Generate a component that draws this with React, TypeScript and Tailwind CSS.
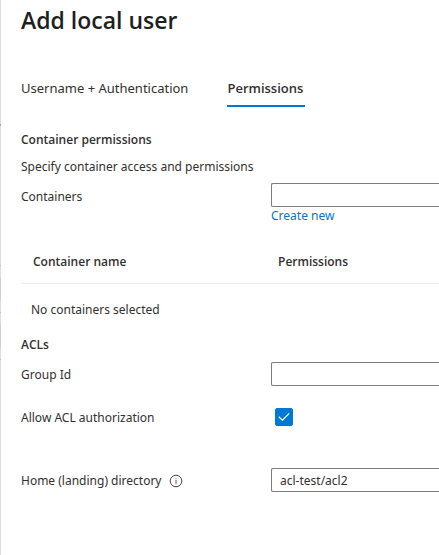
import { useState } from 'react';

const fieldClass =
  'h-6 min-w-0 flex-1 rounded-l-xs border border-r-0 border-[#7f7d7b] bg-white px-2 text-[#323130] outline-none focus:border-[#0078d4]';

function InfoIcon() {
  return (
    <svg width="14" height="14" viewBox="0 0 14 14" fill="none" role="img" aria-label="More information">
      <circle cx="7" cy="7" r="5.8" stroke="#484644" strokeWidth="1" />
      <path d="M7 6v4" stroke="#605e5c" strokeWidth="1" />
      <path d="M7 4v1" stroke="#605e5c" strokeWidth="1" />
    </svg>
  );
}

function PageEdge() {
  return (
    <div aria-hidden="true" className="flex w-px shrink-0 flex-col bg-[#dcdcdc]">
      <div className="mt-[124px] h-[2px] bg-[#a8a8a8]" />
      <div className="mt-[139px] h-px bg-[#c0c0c0]" />
      <div className="mt-[11px] h-6 bg-[#cfcfcf]" />
      <div className="mt-[11px] h-px bg-[#c0c0c0]" />
      <div className="mt-[11px] h-6 bg-[#cfcfcf]" />
      <div className="mt-[11px] h-px bg-[#c0c0c0]" />
    </div>
  );
}

export default function App() {
  const [container, setContainer] = useState('');
  const [groupId, setGroupId] = useState('');
  const [allowAcl, setAllowAcl] = useState(true);
  const [home, setHome] = useState('acl-test/acl2');

  return (
    <div className="flex min-h-screen bg-white font-['Noto_Sans','Open_Sans',sans-serif] text-[12px] leading-5 text-[#323130]">
      <PageEdge />
      <main className="min-w-0 flex-1 pt-1 pb-10 pl-5">
        <h1 className="font-['Open_Sans','Noto_Sans',sans-serif] text-[23px] leading-8 font-semibold text-[#201f1e]">
          Add local user
        </h1>

        <div role="tablist" className="mt-[42px] flex gap-[39px] text-[13px]">
          <button type="button" role="tab" aria-selected="false" className="border-b-2 border-transparent pb-[7px]">
            Username + Authentication
          </button>
          <button
            type="button"
            role="tab"
            aria-selected="true"
            className="border-b-2 border-[#0078d4] pr-[2px] pb-[7px] font-['Open_Sans','Noto_Sans',sans-serif] font-semibold"
          >
            Permissions
          </button>
        </div>

        <section className="mt-[23px]">
          <h2 className="font-['Open_Sans','Noto_Sans',sans-serif] font-semibold">Container permissions</h2>
          <p className="mt-[7px]">Specify container access and permissions</p>
          <div className="mt-[5px] flex items-center">
            <label htmlFor="containers" className="w-[250px] shrink-0 pt-[5px]">
              Containers
            </label>
            <input
              id="containers"
              className={fieldClass}
              value={container}
              onChange={(e) => setContainer(e.target.value)}
            />
          </div>
          <a href="#create" className="-mt-px ml-[250px] block w-fit text-[#0078d4] hover:underline">
            Create new
          </a>

          <table className="mt-[14px] w-full table-fixed border-collapse text-left">
            <thead className="font-['Open_Sans','Noto_Sans',sans-serif]">
              <tr className="h-[43px] border-b border-[#edebe9]">
                <th scope="col" className="w-[245px] pt-[2px] pl-3 font-semibold">
                  Container name
                </th>
                <th scope="col" className="pt-[2px] pl-3 font-semibold">
                  Permissions
                </th>
              </tr>
            </thead>
            <tbody>
              <tr className="h-[52px]">
                <td colSpan={2} className="pt-[2px] pl-[10px]">
                  No containers selected
                </td>
              </tr>
            </tbody>
          </table>
        </section>

        <section>
          <h2 className="font-['Open_Sans','Noto_Sans',sans-serif] font-semibold">ACLs</h2>
          <div className="mt-[7px] flex items-center">
            <label htmlFor="group-id" className="w-[250px] shrink-0 pt-[2px]">
              Group Id
            </label>
            <input id="group-id" className={fieldClass} value={groupId} onChange={(e) => setGroupId(e.target.value)} />
          </div>
          <div className="mt-[19px] flex h-6 items-center">
            <label htmlFor="allow-acl" className="w-[254px] shrink-0 pt-[2px]">
              Allow ACL authorization
            </label>
            <span className="grid size-[18px] place-items-center">
              <input
                id="allow-acl"
                type="checkbox"
                checked={allowAcl}
                onChange={(e) => setAllowAcl(e.target.checked)}
                className="peer col-start-1 row-start-1 size-[18px] appearance-none rounded-xs border border-[#605e5c] bg-white checked:border-[#0078d4] checked:bg-[#0078d4]"
              />
              <svg
                viewBox="0 0 18 18"
                className="pointer-events-none invisible col-start-1 row-start-1 size-[18px] peer-checked:visible"
                fill="none"
                aria-hidden="true"
              >
                <path d="M3.8 8.7 7.4 12.2 14.2 5.3" stroke="white" strokeWidth="1.2" />
              </svg>
            </span>
          </div>
          <div className="mt-[39px] flex items-center">
            <div className="flex w-[250px] shrink-0 items-center gap-[7px] pt-[2px]">
              <label htmlFor="home-directory">Home (landing) directory</label>
              <InfoIcon />
            </div>
            <input id="home-directory" className={fieldClass} value={home} onChange={(e) => setHome(e.target.value)} />
          </div>
        </section>
      </main>
    </div>
  );
}
